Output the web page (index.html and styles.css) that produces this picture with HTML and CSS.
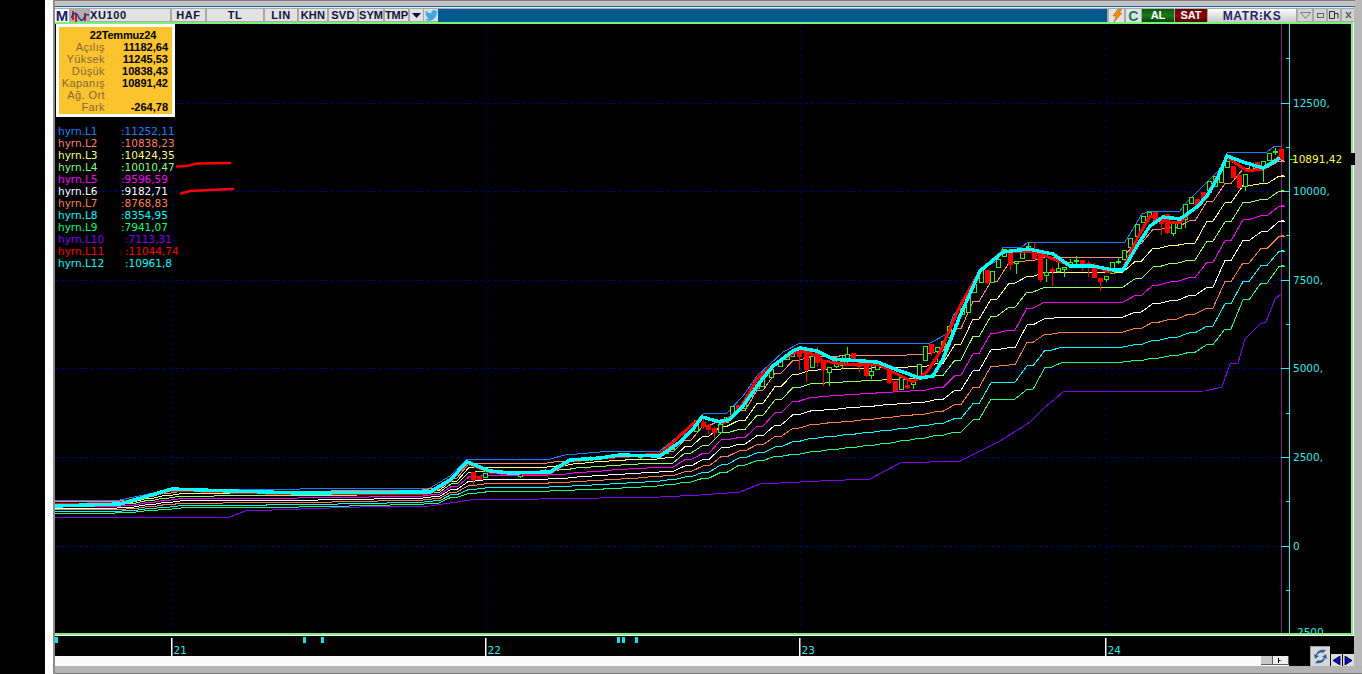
FILE: index.html
```html
<!DOCTYPE html>
<html lang="tr">
<head>
  <meta charset="UTF-8">
  <title>XU100</title>
  <link rel="stylesheet" href="styles.css">
</head>
<body>
  <div class="gutter"></div>
  <div class="margin"></div>
  <div class="window">
    <div class="titlebar"></div>
    <div class="toolbar">
      <span class="logo-m">M</span>
      <span class="tool-icon">
        <svg width="18" height="13" viewBox="0 0 18 13">
          <path d="M2 1v9M5 3v9M14 3v8" stroke="#d01818" stroke-width="2" fill="none"/>
          <path d="M0 8C3 2 5 2 7 6s4 6 6 2 3-4 5-3" stroke="#1a3a9a" stroke-width="1.4" fill="none"/>
        </svg>
      </span>
      <span class="btn btn-symbol">XU100</span>
      <span class="btn btn-haf">HAF</span>
      <span class="btn btn-tl">TL</span>
      <span class="btn btn-lin">LIN</span>
      <span class="btn btn-khn">KHN</span>
      <span class="btn btn-svd">SVD</span>
      <span class="btn btn-sym">SYM</span>
      <span class="btn btn-tmp">TMP</span>
      <span class="btn btn-arrow"><svg width="9" height="5" viewBox="0 0 9 5"><path d="M0 0h9L4.500 5z" fill="#101040"/></svg></span>
      <span class="btn btn-twitter">
        <svg width="13" height="11" viewBox="0 0 24 20"><path d="M24 2.400a10 10 0 0 1-2.800.8A5 5 0 0 0 23.300.500a10 10 0 0 1-3.100 1.200 4.900 4.900 0 0 0-8.400 4.500A14 14 0 0 1 1.700 1a4.900 4.900 0 0 0 1.500 6.600 5 5 0 0 1-2.200-.600c0 2.400 1.700 4.400 3.900 4.900a5 5 0 0 1-2.200.1 4.900 4.900 0 0 0 4.600 3.400A10 10 0 0 1 0 17.400 14 14 0 0 0 7.500 19.600c9.100 0 14.100-7.500 14.100-14v-.600A10 10 0 0 0 24 2.400z" fill="#38a8e0"/></svg>
      </span>
      <span class="toolbar-fill"></span>
      <span class="btn btn-flash"><svg width="10" height="13" viewBox="0 0 10 13"><path d="M6 0h4L7 4h3L2 13l2-6H1z" fill="#f09010" stroke="#a06008" stroke-width=".5"/></svg></span>
      <span class="btn btn-refresh">C</span>
      <span class="trade trade-buy">AL</span>
      <span class="trade trade-sell">SAT</span>
      <span class="brand">MATR<span class="brand-dots">I</span>KS</span>
      <span class="btn win-btn"><svg width="11" height="7" viewBox="0 0 11 7"><path d="M.5.500h10L5.500 6.500z" fill="none" stroke="#808080"/></svg></span>
      <span class="btn win-btn win-small"><svg width="7" height="5" viewBox="0 0 7 5"><rect x=".5" y=".5" width="6" height="4" fill="none" stroke="#606060"/></svg></span>
      <span class="btn win-btn win-small"><svg width="10" height="10" viewBox="0 0 10 10"><path d="M.5 1.500h5v7h-5zM5.500 3.500h3.500v5" fill="none" stroke="#303030"/></svg></span>
      <span class="btn win-btn win-small"><svg width="7" height="8" viewBox="0 0 7 8"><path d="M1 1l5 6M6 1L1 7" stroke="#606060" stroke-width="1.500"/></svg></span>
    </div>

    <div class="main">
      <div class="plot">
        <svg id="chart" class="chart-svg" width="1296" height="609" viewBox="55 25 1296 609"></svg>

        <div class="info-box">
          <div class="info-date">22Temmuz24</div>
          <div class="info-row"><span>Açılış</span><b>11182,64</b></div>
          <div class="info-row"><span>Yüksek</span><b>11245,53</b></div>
          <div class="info-row"><span>Düşük</span><b>10838,43</b></div>
          <div class="info-row"><span>Kapanış</span><b>10891,42</b></div>
          <div class="info-row"><span>Ağ. Ort</span><b></b></div>
          <div class="info-row"><span>Fark</span><b>-264,78</b></div>
        </div>

        <div class="legend">
          <div class="l1"><span class="name">hyrn.L1</span>:11252,11</div>
          <div class="l2"><span class="name">hyrn.L2</span>:10838,23</div>
          <div class="l3"><span class="name">hyrn.L3</span>:10424,35</div>
          <div class="l4"><span class="name">hyrn.L4</span>:10010,47</div>
          <div class="l5"><span class="name">hyrn.L5</span>:9596,59</div>
          <div class="l6"><span class="name">hyrn.L6</span>:9182,71</div>
          <div class="l7"><span class="name">hyrn.L7</span>:8768,83</div>
          <div class="l8"><span class="name">hyrn.L8</span>:8354,95</div>
          <div class="l9"><span class="name">hyrn.L9</span>:7941,07</div>
          <div class="l10"><span class="name wide">hyrn.L10</span>:7113,31</div>
          <div class="l11"><span class="name wide">hyrn.L11</span>:11044,74</div>
          <div class="l12"><span class="name wide">hyrn.L12</span>:10961,8</div>
        </div>

        <div class="last-tag"></div>
      </div>

      <svg id="timeAxis" class="time-svg" width="1299" height="20" viewBox="55 637 1299 20"></svg>

      <div class="bottom-strip">
        <div class="scroll-track"></div>
        <span class="scroll-btn"></span>
        <span class="scroll-btn scroll-next"><svg width="5" height="5" viewBox="0 0 5 5"><path d="M0 0v5h1V3l3-.5L1 2V0z" fill="#000"/></svg></span>
        <div class="scroll-end"></div>
      </div>

      <div class="nav-buttons">
        <span class="nav-btn nav-sync">
          <svg width="15" height="15" viewBox="0 0 15 15"><path d="M13 1C9 0 4 1 3 6L1 5l1 5 4-3-2-.5C5 4 8 3 10 4zM2 14c4 1 9 0 10-5l2 1-1-5-4 3 2 .5c-1 2.500-4 3.500-6 2.500z" fill="#2a62a8"/></svg>
        </span>
        <span class="nav-btn"><svg width="9" height="9" viewBox="0 0 9 9"><path d="M8 0v9L1 4.500z" fill="#0808d8" stroke="#000" stroke-width=".8"/></svg></span>
        <span class="nav-btn"><svg width="9" height="9" viewBox="0 0 9 9"><path d="M1 0v9l7-4.500z" fill="#0808d8" stroke="#000" stroke-width=".8"/></svg></span>
      </div>
    </div>
    <div class="footer"></div>
  </div>
  <script src="chart.js"></script>
</body>
</html>
```

FILE: styles.css
```css
body {
  margin: 0;
  width: 1362px;
  height: 674px;
  overflow: hidden;
  display: flex;
  background: #000;
  font-family: "Liberation Sans", sans-serif;
}

.gutter { width: 45px; background: #000; }
.margin { width: 8px; background: #fff; }

.window {
  width: 1309px;
  display: flex;
  flex-direction: column;
  background: #b8b8b8;
  border-left: 2px solid #8c8c8c;
  box-sizing: border-box;
}

.titlebar {
  height: 7px;
  background: #c4c4c4;
  border-top: 1px solid #808080;
  border-bottom: 1px solid #1c6a9c;
  box-sizing: border-box;
  margin-right: 7px;
}

/* toolbar */
.toolbar {
  height: 15px;
  display: flex;
  align-items: flex-start;
  gap: 2px;
  background: #a8a8a8;
  padding-top: 1px;
  margin-right: 8px;
  box-sizing: border-box;
  color: #14143c;
  border-top: 1px solid #e8e8e8;
}

.logo-m {
  width: 14px;
  height: 13px;
  background: #fff;
  color: #1a1a6a;
  font: bold 15px/13px "Liberation Sans", sans-serif;
  text-align: center;
}

.tool-icon {
  width: 18px;
  height: 13px;
  background: #b0b0b0;
}

.btn {
  height: 12px;
  background: #e2e2e2;
  font: bold 11px/12px "Liberation Sans", sans-serif;
  letter-spacing: .6px;
  text-align: center;
  display: flex;
  align-items: center;
  justify-content: center;
}

.btn-symbol { width: 80px; justify-content: flex-start; margin-left: -1px; }
.btn-haf { width: 33px; }
.btn-tl { width: 56px; }
.btn-lin { width: 32px; }
.btn-khn { width: 28px; letter-spacing: .3px; }
.btn-svd { width: 28px; letter-spacing: .3px; }
.btn-sym { width: 24px; letter-spacing: 0; }
.btn-tmp { width: 23px; letter-spacing: 0; }
.btn-arrow { width: 13px; }
.btn-twitter { width: 14px; margin-left: -1px; background: #dcdcdc; }

.toolbar-fill {
  flex: 1;
  height: 13px;
  background: #005a8e;
  margin: 0 -2px;
}

.btn-flash { width: 15px; height: 13px; margin-left: 2px; }
.btn-refresh { width: 15px; height: 13px; color: #0a8060; font-size: 14px; }

.trade {
  width: 32px;
  height: 13px;
  color: #fff;
  font: bold 11px/13px "Liberation Sans", sans-serif;
  text-align: center;
  margin-left: -1px;
}
.trade-buy { background: linear-gradient(#0a5a0a, #1a7a1a 50%, #064006); }
.trade-sell { background: linear-gradient(#640000, #8a0808 50%, #500000); }

.brand {
  width: 88px;
  height: 13px;
  background: linear-gradient(#fdfdfd, #c8c8c8);
  color: #262668;
  font: bold 12px/14px "Liberation Sans", sans-serif;
  letter-spacing: .7px;
  text-align: center;
  margin-left: -1px;
}

.brand-dots {
  color: transparent;
  background: repeating-linear-gradient(#3a4a90 0 2px, transparent 2px 3px);
  -webkit-background-clip: text;
  background-clip: text;
}

.win-btn { width: 14px; height: 12px; background: #d4d4d4; }
.win-small { width: 12px; }

/* chart */
.main {
  position: relative;
  width: 1299px;
  background: #fff;
}

.plot {
  position: relative;
  width: 1296px;
  height: 609px;
  background: #000;
  border: solid #7cf07c;
  border-width: 2px 2px 2px 0;
  margin-bottom: 1px;
}

.chart-svg,
.time-svg { display: block; background: #000; }

.chart-svg text,
.time-svg text {
  font-family: "DejaVu Sans", sans-serif;
  font-size: 10.5px;
}

.info-box {
  position: absolute;
  left: 1px;
  top: 0;
  width: 113px;
  height: 85px;
  padding-top: 2px;
  background: #fbc32d;
  border: 3px solid #fff;
  box-sizing: content-box;
  font-size: 11px;
  line-height: 12px;
  color: #000;
}

.info-date {
  text-align: center;
  font-weight: bold;
  letter-spacing: -.2px;
  padding-left: 15px;
}

.info-row {
  display: flex;
  height: 12px;
}

.info-row span {
  width: 46px;
  text-align: right;
  color: #85693a;
  letter-spacing: .4px;
}

.info-row b {
  width: 63px;
  text-align: right;
}

.legend {
  position: absolute;
  left: 3px;
  top: 101px;
  font: 10.5px/12px "DejaVu Sans", sans-serif;
  white-space: nowrap;
}

.name { display: inline-block; width: 63px; }
.name.wide { width: 67px; }

.l1 { color: #1880ff; }
.l2 { color: #ff7f70; }
.l3 { color: #ffff80; }
.l4 { color: #80ff80; }
.l5 { color: #ff00ff; }
.l6 { color: #ffffff; }
.l7 { color: #ff8040; }
.l8 { color: #00ffff; }
.l9 { color: #00ff80; }
.l10 { color: #8000ff; }
.l11 { color: #ff0000; }
.l12 { color: #00ffff; }

.last-tag {
  position: absolute;
  right: -4px;
  top: 129px;
  width: 10px;
  height: 12px;
  background: #000;
}

/* bottom */
.bottom-strip {
  display: flex;
  height: 10px;
}

.scroll-track {
  width: 1206px;
  background: #fafafa radial-gradient(#e4e4e4 .5px, transparent .6px) 0 0 / 2px 2px;
}

.scroll-btn {
  width: 11px;
  height: 8px;
  background: #c8c8c8;
  border-right: 1px solid #606060;
  border-bottom: 1px solid #606060;
  box-sizing: content-box;
}

.scroll-next {
  width: 15px;
  background: #f0f0f0;
  display: flex;
  align-items: center;
  justify-content: center;
}

.scroll-end { flex: 1; background: #000; }

.nav-buttons {
  position: absolute;
  right: 0;
  bottom: 0;
  display: flex;
  align-items: flex-end;
  gap: 1px;
}

.nav-btn {
  width: 11px;
  height: 12px;
  background: #dcdcdc;
  display: flex;
  align-items: center;
  justify-content: center;
}

.nav-sync {
  width: 20px;
  height: 20px;
  background: #d8d8d8;
  border-top: 1px solid #a0a0a0;
  border-left: 1px solid #a0a0a0;
  box-sizing: border-box;
}

.footer {
  flex: 1;
  background: #b4b4b4;
  border-bottom: 1px solid #7a7a7a;
}
```

FILE: chart.js
```js
const NS = "http://www.w3.org/2000/svg";
const chart = document.getElementById("chart");
const timeAxis = document.getElementById("timeAxis");

function add(parent, tag, attrs, text) {
  const el = document.createElementNS(NS, tag);
  for (const k in attrs) el.setAttribute(k, attrs[k]);
  if (text) el.textContent = text;
  parent.appendChild(el);
  return el;
}

function line(points, color, width) {
  add(chart, "polyline", {
    points: points.map(p => p.join(",")).join(" "),
    fill: "none",
    stroke: color,
    "stroke-width": width,
    "shape-rendering": "crispEdges"
  });
}

// top band (L1) and the L9 line, same feature on each row: x1, y1, x9, y9
const band = [
  [55, 501, 55, 514], [120, 501, 120, 514], [172, 490, 180, 509], [300, 490, 300, 508],
  [430, 489, 430, 505], [450, 477, 455, 497], [467, 460, 475, 493], [550, 460, 550, 492],
  [565, 456, 600, 490], [612, 452, 655, 487], [660, 452, 680, 484], [677, 438, 700, 480],
  [692, 432, 715, 476], [703, 415, 735, 467], [727, 414, 752, 463], [743, 397, 770, 458],
  [757, 377, 785, 456], [783, 353, 795, 455], [800, 344, 800, 454], [850, 344, 880, 445],
  [930, 344, 932, 437], [947, 335, 950, 434], [953, 317, 960, 432], [967, 297, 975, 419],
  [980, 270, 990, 400], [997, 262, 1022, 400], [1003, 248, 1035, 375], [1022, 248, 1050, 365],
  [1028, 243, 1062, 363], [1125, 243, 1125, 363], [1142, 215, 1160, 358], [1150, 212, 1185, 355],
  [1180, 212, 1220, 340], [1185, 205, 1230, 320], [1207, 183, 1240, 303], [1222, 168, 1250, 296],
  [1227, 154, 1256, 288], [1267, 153, 1270, 277], [1275, 147, 1276, 270], [1281, 147, 1281, 266]
];

const purple = [
  [55, 518], [230, 518], [245, 512], [300, 510], [360, 508], [430, 507], [470, 501], [540, 500],
  [660, 498], [700, 496], [740, 493], [760, 485], [820, 482], [870, 480], [885, 472], [900, 464],
  [960, 462], [1000, 442], [1030, 423], [1045, 408], [1055, 400], [1063, 393], [1205, 392],
  [1222, 388], [1230, 365], [1238, 364], [1245, 340], [1260, 325], [1266, 323], [1275, 300], [1281, 295]
];

const red = [
  [55, 506], [120, 504], [172, 491], [230, 493], [300, 495], [430, 494], [450, 482], [467, 464],
  [490, 473], [510, 475], [550, 474], [570, 462], [600, 459], [630, 457], [660, 455], [693, 425],
  [703, 418], [723, 424], [740, 410], [757, 380], [773, 366], [797, 352], [807, 352], [823, 362],
  [843, 365], [877, 365], [893, 373], [913, 383], [927, 373], [940, 353], [960, 307], [980, 272],
  [1003, 252], [1033, 252], [1053, 260], [1073, 267], [1097, 267], [1107, 273], [1123, 270],
  [1137, 240], [1150, 217], [1170, 223], [1180, 223], [1197, 207], [1207, 196], [1217, 178],
  [1227, 158], [1247, 172], [1263, 170], [1280, 157]
];

const cyan = [
  [55, 507], [120, 505], [172, 490], [230, 492], [300, 494], [430, 493], [450, 481], [467, 463],
  [490, 472], [510, 474], [550, 473], [570, 461], [600, 459], [620, 456], [660, 457], [680, 443],
  [693, 430], [702, 418], [720, 423], [730, 420], [743, 407], [760, 383], [773, 367], [793, 352],
  [800, 349], [817, 352], [833, 360], [877, 363], [900, 372], [920, 379], [933, 377], [943, 360],
  [960, 317], [980, 272], [1003, 253], [1028, 250], [1053, 255], [1070, 267], [1093, 267],
  [1113, 271], [1123, 271], [1137, 247], [1150, 227], [1163, 218], [1180, 220], [1197, 208],
  [1207, 197], [1217, 180], [1227, 157], [1243, 163], [1263, 169], [1280, 159]
];

// x, body top, body bottom, wick top, wick bottom, up
const candles = [
  [473, 473, 480, 473, 486, 0], [479, 477, 480, 477, 481, 0], [485, 474, 478, 474, 478, 1],
  [520, 475, 477, 474, 479, 1], [545, 471, 473, 470, 474, 1], [578, 459, 462, 458, 464, 0],
  [590, 458, 461, 457, 462, 1], [640, 456, 458, 455, 460, 1], [666, 448, 454, 448, 454, 1], [672, 445, 450, 445, 450, 1],
  [696, 421, 432, 421, 432, 1], [703, 423, 427, 420, 430, 0], [708, 426, 430, 425, 435, 0],
  [714, 429, 433, 428, 439, 0], [720, 425, 433, 425, 433, 1], [726, 418, 423, 418, 423, 1],
  [732, 407, 415, 407, 415, 1], [738, 406, 409, 406, 409, 0], [744, 405, 409, 405, 409, 1],
  [750, 392, 397, 392, 397, 1], [757, 385, 389, 385, 389, 1], [762, 377, 387, 377, 387, 1],
  [771, 370, 378, 370, 378, 1], [780, 362, 367, 362, 367, 1], [787, 355, 360, 355, 360, 1],
  [792, 353, 357, 353, 357, 1], [799, 351, 357, 351, 371, 0], [806, 353, 370, 353, 383, 0],
  [812, 357, 368, 357, 368, 1], [817, 354, 363, 348, 368, 0], [823, 361, 370, 361, 387, 0],
  [829, 368, 373, 368, 387, 1], [836, 363, 367, 358, 369, 1], [842, 362, 366, 357, 370, 1],
  [847, 355, 361, 348, 364, 1], [853, 354, 362, 354, 367, 0], [859, 363, 367, 363, 373, 0],
  [866, 365, 376, 365, 378, 0], [871, 372, 376, 367, 380, 1], [877, 365, 370, 365, 370, 1],
  [889, 369, 383, 369, 385, 0], [895, 382, 391, 382, 393, 0], [901, 378, 390, 378, 390, 1],
  [907, 386, 388, 380, 390, 0], [913, 383, 385, 383, 390, 1], [919, 365, 378, 365, 378, 1],
  [925, 347, 361, 347, 361, 1], [931, 345, 353, 345, 357, 0], [937, 348, 352, 348, 363, 1],
  [943, 342, 347, 342, 347, 1], [949, 327, 338, 327, 338, 1], [955, 318, 325, 318, 325, 1],
  [962, 309, 315, 309, 315, 1], [968, 297, 313, 297, 313, 1], [974, 285, 293, 285, 293, 1],
  [981, 271, 283, 271, 283, 1], [987, 271, 283, 271, 285, 0], [992, 272, 283, 272, 283, 1],
  [998, 260, 268, 260, 268, 1], [1004, 250, 257, 250, 257, 1], [1010, 252, 265, 252, 271, 0],
  [1016, 262, 264, 262, 275, 1], [1022, 252, 259, 252, 259, 1], [1028, 247, 250, 243, 250, 1],
  [1034, 250, 259, 243, 259, 0], [1040, 255, 280, 255, 283, 0], [1046, 273, 276, 260, 283, 1],
  [1052, 270, 272, 268, 287, 0], [1058, 269, 272, 264, 274, 1], [1064, 268, 270, 268, 278, 1],
  [1070, 263, 265, 260, 267, 1], [1076, 261, 262, 257, 267, 1], [1082, 261, 267, 261, 272, 0],
  [1088, 264, 266, 262, 278, 0], [1094, 266, 278, 264, 278, 0], [1100, 279, 282, 279, 292, 0],
  [1106, 277, 280, 277, 283, 1], [1112, 263, 274, 263, 274, 1], [1118, 262, 263, 258, 265, 1],
  [1124, 251, 260, 251, 260, 1], [1130, 239, 248, 239, 248, 1], [1137, 225, 237, 225, 237, 1],
  [1143, 217, 223, 217, 223, 1], [1149, 213, 217, 213, 217, 1], [1155, 213, 223, 213, 225, 0],
  [1161, 222, 224, 222, 236, 0], [1167, 215, 233, 215, 235, 0], [1173, 224, 234, 224, 237, 1],
  [1179, 221, 229, 221, 229, 1], [1185, 205, 220, 205, 229, 1], [1191, 198, 204, 198, 204, 1],
  [1197, 200, 205, 200, 210, 0], [1203, 193, 199, 193, 199, 0], [1209, 182, 193, 182, 193, 1],
  [1215, 177, 187, 177, 187, 1], [1221, 169, 183, 169, 183, 1], [1227, 162, 168, 162, 168, 1],
  [1233, 167, 178, 167, 178, 0], [1239, 176, 188, 176, 188, 0], [1245, 175, 187, 175, 192, 1],
  [1251, 165, 170, 165, 170, 1], [1257, 163, 170, 163, 172, 0], [1263, 162, 167, 162, 183, 1],
  [1269, 154, 161, 154, 161, 1], [1275, 152, 153, 149, 156, 1], [1281, 150, 160, 148, 160, 0]
];

const yAt = v => 546.5 - v * 0.03544;
const gridX = [172, 486, 800, 1106];
const gridValues = [12500, 10000, 7500, 5000, 2500, 0];

function dashed(x1, y1, x2, y2, color, dash) {
  add(chart, "line", {
    x1, y1, x2, y2,
    stroke: color,
    "stroke-dasharray": dash,
    "shape-rendering": "crispEdges"
  });
}

gridValues.forEach(v => {
  const y = Math.round(yAt(v)) + 0.5;
  dashed(55, y, 1281, y, "#000088", "3 3");
});
gridX.forEach(x => dashed(x + 0.5, 25, x + 0.5, 634, "#000070", "2 4"));

// price axis
add(chart, "line", { x1: 1281.5, y1: 25, x2: 1281.5, y2: 634, stroke: "#802088", "shape-rendering": "crispEdges" });
add(chart, "line", { x1: 1289.5, y1: 25, x2: 1289.5, y2: 634, stroke: "#30e8e8", "shape-rendering": "crispEdges" });

for (let v = -1250; v <= 13750; v += 1250) {
  const y = Math.round(yAt(v)) + 0.5;
  const major = v % 2500 === 0;
  add(chart, "line", { x1: major ? 1281 : 1286, y1: y, x2: 1289, y2: y, stroke: "#30e8e8", "shape-rendering": "crispEdges" });
}

gridValues.forEach(v => {
  const label = v === 0 ? "0" : v + ",";
  add(chart, "text", { x: 1293, y: yAt(v) + 4, fill: "#30e8e8" }, label);
});
add(chart, "text", { x: 1297, y: 637, fill: "#30e8e8" }, "2500");

// level lines
function interp(points, x) {
  for (let i = 1; i < points.length; i++) {
    if (x <= points[i][0]) {
      const [x0, y0] = points[i - 1];
      const [x1, y1] = points[i];
      return y0 + (y1 - y0) * (x - x0) / (x1 - x0);
    }
  }
  return points[points.length - 1][1];
}

const levelColors = ["#1880ff", "#ff8878", "#ffff80", "#90ff70", "#ff00ff", "#ffffff", "#ff8040", "#00ffff", "#20ff80"];

levelColors.forEach((color, n) => {
  const t = n / 8;
  const curve = band.map(r => [r[0] + (r[2] - r[0]) * t, r[1] + (r[3] - r[1]) * t]);
  if (n === 0) {
    line(curve, color, 1);
    return;
  }
  const stepped = [];
  for (let x = 55; x < 1281; x += 18) {
    const y = interp(curve, x);
    stepped.push([x, y], [x + 6, y]);
  }
  stepped.push([1281, interp(curve, 1281)]);
  line(stepped, color, 1);
});

line(purple, "#8000ff", 1);

// candles
candles.forEach(([x, top, bot, wickTop, wickBot, up]) => {
  const color = up ? "#30f010" : "#ff0000";
  add(chart, "line", { x1: x + 0.5, y1: wickTop, x2: x + 0.5, y2: wickBot, stroke: color, "shape-rendering": "crispEdges" });
  add(chart, "rect", {
    x: x - 1.5,
    y: top + 0.5,
    width: 4,
    height: Math.max(bot - top, 1),
    fill: up ? "#000" : color,
    stroke: color,
    "shape-rendering": "crispEdges"
  });
});

line(red, "#ff0000", 3);
line(cyan, "#00ffff", 3.5);

// last close
add(chart, "rect", { x: 1289, y: 160, width: 6, height: 1, fill: "#30f010", "shape-rendering": "crispEdges" });
add(chart, "text", { x: 1292, y: 164, fill: "#ffff40" }, "10891,42");

// hand drawn marks over the legend
const marks = [
  [[177, 167.5], [187, 167], [197, 164.5], [230, 164]],
  [[181, 194.5], [190, 192], [210, 191], [233, 190]]
];
marks.forEach(m => add(chart, "polyline", {
  points: m.map(p => p.join(",")).join(" "),
  fill: "none",
  stroke: "#ff0000",
  "stroke-width": 2.5,
  "stroke-linecap": "round"
}));

// time axis
[[21, 172], [22, 486], [23, 800], [24, 1106]].forEach(([year, x]) => {
  add(timeAxis, "rect", { x: x - 1, y: 639, width: 1.5, height: 18, fill: "#fff" });
  add(timeAxis, "text", { x: x + 1.5, y: 655, fill: "#30e8e8" }, String(year));
});

[55, 303, 321, 617, 622, 635].forEach(x => {
  add(timeAxis, "rect", { x, y: 638, width: 3, height: 6, fill: "#00e8f0" });
});
```
